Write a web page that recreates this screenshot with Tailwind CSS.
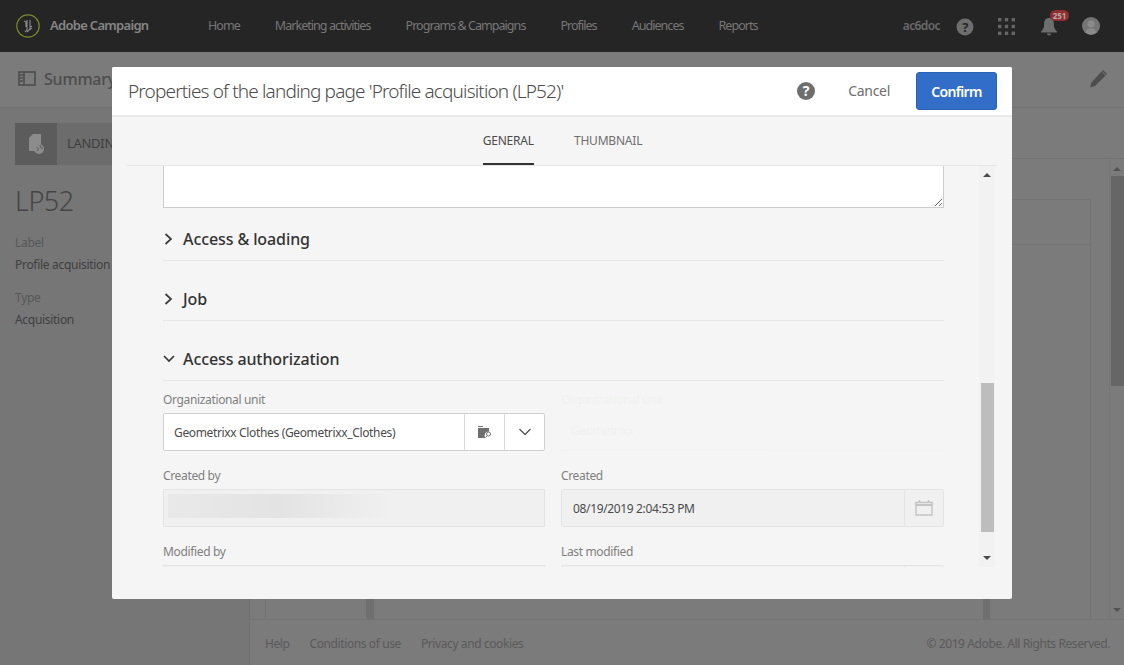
<!DOCTYPE html>
<html lang="en">
<head>
<meta charset="utf-8">
<title>Adobe Campaign</title>
<script src="https://cdn.jsdelivr.net/npm/@tailwindcss/browser@4"></script>
</head>
<body class="font-['Noto_Sans',sans-serif] overflow-hidden">
<div class="relative w-[1124px] h-[665px] overflow-hidden bg-[#7b7b7b] flex flex-col">
  <!-- top bar -->
  <header class="h-[52px] bg-[#252525] flex items-center shrink-0 text-[#777777] text-[12.5px] tracking-[-0.95px]">
    <svg class="ml-[16px] w-[24px] h-[24px]" viewBox="0 0 24 24" fill="none"><circle cx="12" cy="12" r="11.2" stroke="#7c8a2c" stroke-width="1.2"/><path d="M8 7l2 1v5M11 6v10l-2 2M14 6v9l-3 3M14 13l2-1M13 16l3-2" stroke="#8a8a8a" stroke-width="1.1"/></svg>
    <span class="ml-[10px] w-[158px] text-[13px] font-semibold text-[#858585] tracking-[-0.7px]">Adobe Campaign</span>
    <nav class="flex gap-[35px]">
      <span>Home</span>
      <span>Marketing activities</span>
      <span>Programs &amp; Campaigns</span>
      <span>Profiles</span>
      <span>Audiences</span>
      <span>Reports</span>
    </nav>
    <div class="ml-auto flex items-center">
      <span class="font-semibold text-[12px] text-[#6a6a6a] tracking-[-0.6px]">ac6doc</span>
      <svg class="ml-[16px] w-[18px] h-[18px] mt-[2px]" viewBox="0 0 18 18"><circle cx="9" cy="9" r="8.5" fill="#6e6e6e"/><text x="9" y="13.5" text-anchor="middle" font-size="13" font-weight="700" fill="#252525" font-family="Noto Sans">?</text></svg>
      <svg class="ml-[24px] w-[17px] h-[17px]" viewBox="0 0 17 17" fill="#656565"><rect x="0" y="0" width="3.4" height="3.4"/><rect x="6.8" y="0" width="3.4" height="3.4"/><rect x="13.6" y="0" width="3.4" height="3.4"/><rect x="0" y="6.8" width="3.4" height="3.4"/><rect x="6.8" y="6.8" width="3.4" height="3.4"/><rect x="13.6" y="6.8" width="3.4" height="3.4"/><rect x="0" y="13.6" width="3.4" height="3.4"/><rect x="6.8" y="13.6" width="3.4" height="3.4"/><rect x="13.6" y="13.6" width="3.4" height="3.4"/></svg>
      <div class="relative ml-[26px] w-[16px] h-[18px] mt-[2px]">
        <svg class="w-[16px] h-[18px]" viewBox="0 0 16 18" fill="#6e6e6e"><path d="M8 0c-3.2 0-4.8 2.4-4.8 5.4 0 4-1 6-3.2 8.2v1h16v-1c-2.2-2.2-3.200-4.200-3.200-8.200C12.800 2.400 11.200 0 8 0z"/><path d="M6 15.500h4a2 2 0 0 1-4 0z"/></svg>
        <span class="absolute left-[9px] top-[-8px] w-[19px] h-[11px] rounded-full bg-[#8f2f2f] text-[8px] leading-[11px] text-center font-bold text-[#b9a8a8] tracking-normal">251</span>
      </div>
      <svg class="ml-[25px] mr-[24px] w-[18px] h-[18px]" viewBox="0 0 18 18"><circle cx="9" cy="9" r="9" fill="#757575"/><circle cx="9" cy="7" r="3.500" fill="#8b8b8b"/><path d="M3.500 15.500c1-3.500 3-4 5.500-4s4.500.5 5.500 4a9 9 0 0 1-11 0z" fill="#8b8b8b"/></svg>
    </div>
  </header>

  <!-- page subheader -->
  <div class="h-[56px] shrink-0 border-b border-[#727272] flex items-center text-[#4d4d4d] pb-[2px]">
    <svg class="ml-[18px] w-[18px] h-[15px]" viewBox="0 0 18 15" fill="none" stroke="#4d4d4d" stroke-width="1.600"><rect x="1" y="1" width="16" height="13"/><path d="M6 1v13" /><path d="M2 4h3M2 7h3M2 10h3" stroke-width="1.400"/></svg>
    <span class="ml-[8px] text-[16px] font-medium tracking-[-0.2px]">Summary</span>
    <svg class="ml-auto mr-[16px] w-[20px] h-[20px]" viewBox="0 0 20 20" fill="#4d4d4d"><path d="M13.500 2.500l4 4L7 17l-5 1.500L3.500 13.500z"/><path d="M15 1l4 4-1 1-4-4z"/></svg>
  </div>

  <!-- page body -->
  <div class="flex-1 flex min-h-0">
    <aside class="w-[250px] shrink-0 bg-[#767676] border-r border-[#727272] pl-[15px] pt-[15px] text-[#3f3f3f] text-[12px] tracking-[-0.3px]">
      <div class="flex h-[42px] w-[220px] bg-[#6c6c6c] items-center">
        <span class="w-[42px] h-[42px] bg-[#5c5c5c] flex items-center justify-center">
          <svg class="w-[16px] h-[20px]" viewBox="0 0 16 20"><path d="M5 0h8v10a6 6 0 0 0-6 7H1V4z" fill="#8c8c8c"/><circle cx="11" cy="15" r="5" fill="#8c8c8c"/><path d="M8.500 13l2 1.500-1 2.500M12 11l.5 2.500 2.500 1" stroke="#5c5c5c" fill="none"/></svg>
        </span>
        <span class="ml-[10px] text-[13px]">LANDING PAGE</span>
      </div>
      <div class="mt-[16px] text-[27px] leading-[40px] font-light text-[#454545] tracking-[-0.5px]">LP52</div>
      <div class="mt-[13px] text-[#565656] leading-[18px]">Label</div>
      <div class="mt-[4px] leading-[18px]">Profile acquisition (LP52)</div>
      <div class="mt-[15px] text-[#565656] leading-[18px]">Type</div>
      <div class="mt-[4px] leading-[18px]">Acquisition</div>
    </aside>

    <main class="flex-1 flex flex-col min-w-0">
      <div class="h-[51px] shrink-0 border-b border-[#727272]"></div>
      <div class="flex-1 flex min-h-0">
        <div class="flex-1 min-w-0 pt-[40px] pl-[15px] pr-[18px]">
          <div class="h-full border-x border-t border-[#747474] flex flex-col">
            <div class="h-[45px] border-b border-[#747474] shrink-0"></div>
            <div class="flex-1 flex justify-between pl-[100px] pr-[100px]">
              <div class="w-[8px] bg-[#6f6f6f]"></div>
              <div class="w-[7px] bg-[#6f6f6f]"></div>
            </div>
          </div>
        </div>
        <div class="w-[15px] shrink-0 flex flex-col items-center pt-[8px] border-l border-[#767676]">
          <span class="w-0 h-0 border-x-[4px] border-x-transparent border-b-[4px] border-b-[#525252]"></span>
          <div class="mt-[5px] w-[13px] h-[210px] bg-[#666666]"></div>
          <span class="mt-auto mb-[7px] w-0 h-0 border-x-[4px] border-x-transparent border-t-[4px] border-t-[#525252]"></span>
        </div>
      </div>
      <footer class="h-[46px] shrink-0 border-t border-[#747474] flex items-center pl-[15px] pr-[14px] pt-[2px] text-[12px] text-[#5a5a5a] tracking-[-0.4px]">
        <span>Help</span><span class="ml-[20px]">Conditions of use</span><span class="ml-[20px]">Privacy and cookies</span>
        <span class="ml-auto">© 2019 Adobe. All Rights Reserved.</span>
      </footer>
    </main>
  </div>

  <!-- modal -->
  <div class="absolute left-[112px] top-[67px] w-[900px] h-[532px] bg-[#f5f5f5] rounded-[2px] flex flex-col text-[#4b4b4b]">
    <div class="h-[50px] shrink-0 bg-white border-b-2 border-[#e9e9e9] flex items-center pl-[16px] pr-[15px] rounded-t-[2px]">
      <h1 class="text-[19px] font-light text-[#4b4b4b] tracking-[-0.85px]">Properties of the landing page 'Profile acquisition (LP52)'</h1>
      <svg class="ml-auto w-[18px] h-[18px]" viewBox="0 0 18 18"><circle cx="9" cy="9" r="9" fill="#6e6e6e"/><text x="9" y="14" text-anchor="middle" font-size="14" font-weight="700" fill="#fff" font-family="Noto Sans">?</text></svg>
      <span class="ml-[33px] mb-[2px] text-[14px] text-[#6e6e6e] tracking-[-0.3px]">Cancel</span>
      <button class="ml-[26px] w-[81px] h-[38px] rounded-[3px] bg-[#326ec8] border border-[#2a62b6] text-white text-[14px] font-semibold tracking-[-0.7px]">Confirm</button>
    </div>
    <div class="h-[49px] shrink-0 mx-[15px] border-b border-[#e6e6e6] flex justify-center text-[12px]">
      <div class="flex gap-[40px] h-full ml-[1px]">
        <span class="h-full pt-[15px] border-b-2 border-[#323232] text-[#4b4b4b] tracking-[-0.2px] mb-[-1px]">GENERAL</span>
        <span class="pt-[15px] text-[#6e6e6e] tracking-[-0.2px]">THUMBNAIL</span>
      </div>
    </div>

    <div class="h-[401px] shrink-0 flex overflow-hidden">
      <div class="flex-1 min-w-0 overflow-hidden pl-[51px] pr-[35px]">
        <textarea class="block w-full h-[42px] bg-white border border-t-0 border-[#cdcdcd]" aria-label="Description"></textarea>
        <div class="h-[53px] flex items-center border-b border-[#e6e6e6] pt-[10px] text-[#333333]">
          <svg class="w-[12px] h-[12px]" viewBox="0 0 12 12" fill="none" stroke="#3a3a3a" stroke-width="1.700"><path d="M2.500 1l5.500 5-5.500 5"/></svg>
          <span class="ml-[8px] text-[16px] font-medium tracking-[-0.1px]">Access &amp; loading</span>
        </div>
        <div class="h-[60px] flex items-center border-b border-[#e6e6e6] pt-[16px] text-[#333333]">
          <svg class="w-[12px] h-[12px]" viewBox="0 0 12 12" fill="none" stroke="#3a3a3a" stroke-width="1.700"><path d="M2.500 1l5.500 5-5.500 5"/></svg>
          <span class="ml-[8px] text-[16px] font-medium tracking-[-0.1px]">Job</span>
        </div>
        <div class="h-[60px] flex items-center border-b border-[#e6e6e6] pt-[16px] text-[#333333]">
          <svg class="w-[12px] h-[8px]" viewBox="0 0 12 8" fill="none" stroke="#3a3a3a" stroke-width="1.700"><path d="M1 1l5 5 5-5"/></svg>
          <span class="ml-[8px] text-[16px] font-medium tracking-[-0.1px]">Access authorization</span>
        </div>

        <div class="grid grid-cols-[382px_383px] gap-x-[16px] text-[12px] tracking-[-0.35px]">
          <div>
            <div class="h-[32px] pt-[10px] leading-[18px] text-[#808080]">Organizational unit</div>
            <div class="h-[38px] flex bg-white border border-[#d0d0d0] rounded-[2px] text-[#4b4b4b]">
              <span class="flex-1 pl-[10px] leading-[38px]">Geometrixx Clothes (Geometrixx_Clothes)</span>
              <span class="w-[40px] border-l border-[#d8d8d8] flex items-center justify-center">
                <svg class="w-[14px] h-[12px]" viewBox="0 0 14 12"><path d="M0 0h5v1h-5zM0 2h11v3.500a4 4 0 0 0-3.500 6.500H0z" fill="#6e6e6e"/><circle cx="10.500" cy="8" r="2" fill="none" stroke="#6e6e6e"/><path d="M9 10l-1.500 1.500" stroke="#6e6e6e"/></svg>
              </span>
              <span class="w-[40px] border-l border-[#d8d8d8] flex items-center justify-center">
                <svg class="w-[12px] h-[8px]" viewBox="0 0 12 8" fill="none" stroke="#555" stroke-width="1.300"><path d="M.5 1l5.500 5.500L11.500 1"/></svg>
              </span>
            </div>
          </div>
          <div class="opacity-[.02]">
            <div class="h-[32px] pt-[10px] leading-[18px]">Organizational unit</div>
            <div class="h-[38px] flex border-b border-[#808080] pl-[10px] leading-[36px]">Geometrixx</div>
          </div>

          <div>
            <div class="h-[38px] pt-[16px] leading-[18px] text-[#808080]">Created by</div>
            <div class="h-[38px] bg-[#f0f0f0] border border-[#e4e4e4] p-[4px]">
              <div class="h-[24px] w-[222px] bg-gradient-to-r from-[#e9e9e9] via-[#e3e3e3] to-[#f0f0f0]"></div>
            </div>
          </div>
          <div>
            <div class="h-[38px] pt-[16px] leading-[18px] text-[#808080]">Created</div>
            <div class="h-[38px] flex bg-[#f0f0f0] border border-[#e4e4e4] rounded-[2px] text-[#4b4b4b]">
              <span class="flex-1 pl-[11px] leading-[38px]">08/19/2019 2:04:53 PM</span>
              <span class="w-[39px] border-l border-[#e4e4e4] flex items-center justify-center">
                <svg class="w-[18px] h-[16px]" viewBox="0 0 18 16" fill="none" stroke="#c4c4c4" stroke-width="1.500"><rect x="1" y="2.500" width="16" height="12.500"/><path d="M1 5h16" stroke-width="2"/><path d="M4.500 0v3M13.500 0v3"/></svg>
              </span>
            </div>
          </div>

          <div>
            <div class="h-[38px] pt-[16px] leading-[18px] text-[#808080]">Modified by</div>
            <div class="h-[38px] bg-[#f0f0f0] border border-[#e4e4e4]"></div>
          </div>
          <div>
            <div class="h-[38px] pt-[16px] leading-[18px] text-[#808080]">Last modified</div>
            <div class="h-[38px] flex bg-[#f0f0f0] border border-[#e4e4e4] rounded-[2px]">
              <span class="flex-1"></span><span class="w-[39px] border-l border-[#e4e4e4]"></span>
            </div>
          </div>
        </div>
      </div>
      <!-- modal scrollbar -->
      <div class="w-[16px] shrink-0 mr-[17px] bg-[#f2f2f2] flex flex-col items-center pt-[7px]">
        <span class="w-0 h-0 border-x-[4px] border-x-transparent border-b-[4px] border-b-[#4a4a4a]"></span>
        <div class="mt-[206px] w-[13px] h-[149px] bg-[#bdbdbd]"></div>
        <span class="mt-auto mb-[7px] w-0 h-0 border-x-[4px] border-x-transparent border-t-[4px] border-t-[#4a4a4a]"></span>
      </div>
    </div>
  </div>
</div>
</body>
</html>
